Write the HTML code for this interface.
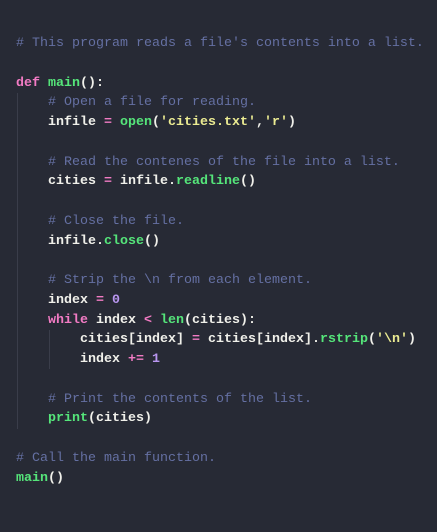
<!DOCTYPE html>
<html><head><style>
body{margin:0;width:437px;height:532px;background:#272a35;overflow:hidden;position:relative}
pre{position:absolute;left:16px;top:34px;margin:0;font-family:"Liberation Mono",monospace;font-size:13.33px;line-height:19.75px;color:#f0f0ea;font-weight:bold;letter-spacing:0}
.c{color:#6570a3;font-weight:normal}.k{color:#f27bc4}.f{color:#55e57a}.s{color:#ebeb92}.n{color:#b996f0}
.g{position:absolute;width:1px;background:#3a3d4a}
</style></head><body>
<div class="g" style="left:17px;top:93px;height:336px"></div>
<div class="g" style="left:49px;top:330px;height:39px"></div>
<pre><span class="c"># This program reads a file's contents into a list.</span>

<span class="k">def</span> <span class="f">main</span>():
    <span class="c"># Open a file for reading.</span>
    infile <span class="k">=</span> <span class="f">open</span>(<span class="s">'cities.txt'</span>,<span class="s">'r'</span>)

    <span class="c"># Read the contenes of the file into a list.</span>
    cities <span class="k">=</span> infile.<span class="f">readline</span>()

    <span class="c"># Close the file.</span>
    infile.<span class="f">close</span>()

    <span class="c"># Strip the \n from each element.</span>
    index <span class="k">=</span> <span class="n">0</span>
    <span class="k">while</span> index <span class="k">&lt;</span> <span class="f">len</span>(cities):
        cities[index] <span class="k">=</span> cities[index].<span class="f">rstrip</span>(<span class="s">'\n'</span>)
        index <span class="k">+=</span> <span class="n">1</span>

    <span class="c"># Print the contents of the list.</span>
    <span class="f">print</span>(cities)

<span class="c"># Call the main function.</span>
<span class="f">main</span>()
</pre>
</body></html>
